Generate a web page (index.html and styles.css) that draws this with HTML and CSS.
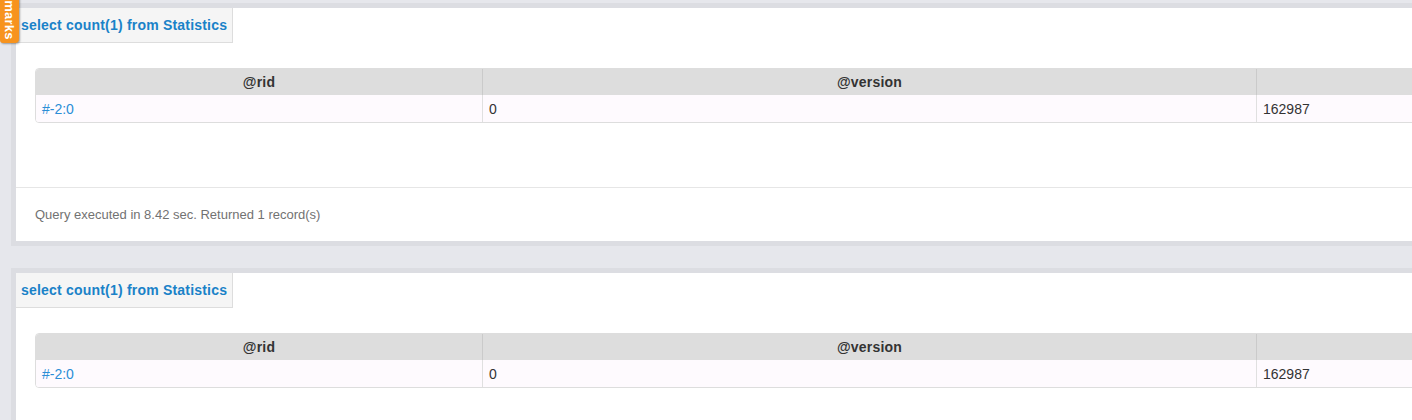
FILE: index.html
```html
<!DOCTYPE html>
<html>
<head>
<meta charset="utf-8">
<link rel="stylesheet" href="styles.css">
</head>
<body>
<div class="bookmarks">Bookmarks</div>
<div class="results">
  <section class="panel">
    <div class="tab">select count(1) from Statistics</div>
    <div class="table-wrap">
      <table class="grid">
        <colgroup><col class="c1"><col class="c2"><col class="c3"></colgroup>
        <thead><tr><th>@rid</th><th>@version</th><th></th></tr></thead>
        <tbody><tr><td><a class="rid">#-2:0</a></td><td>0</td><td>162987</td></tr></tbody>
      </table>
    </div>
    <div class="footer">Query executed in 8.42 sec. Returned 1 record(s)</div>
  </section>
  <section class="panel">
    <div class="tab">select count(1) from Statistics</div>
    <div class="table-wrap">
      <table class="grid">
        <colgroup><col class="c1"><col class="c2"><col class="c3"></colgroup>
        <thead><tr><th>@rid</th><th>@version</th><th></th></tr></thead>
        <tbody><tr><td><a class="rid">#-2:0</a></td><td>0</td><td>162987</td></tr></tbody>
      </table>
    </div>
    <div class="footer">Query executed in 8.42 sec. Returned 1 record(s)</div>
  </section>
</div>
</body>
</html>
```

FILE: styles.css
```css
html, body {
  margin: 0;
  padding: 0;
}
body {
  background: #e6e7ec;
  font-family: "Liberation Sans", Arial, sans-serif;
  overflow: hidden;
  width: 1412px;
  height: 420px;
}
.bookmarks {
  position: absolute;
  left: 0;
  bottom: 377px;
  width: 19px;
  padding: 6px 0 3px;
  background: #f7931e;
  color: #fff;
  font-weight: bold;
  font-size: 13px;
  letter-spacing: 0.2px;
  line-height: 19px;
  text-align: center;
  writing-mode: vertical-rl;
  border-radius: 0 0 4px 3px;
  box-shadow: 1px 1px 2px rgba(0, 0, 0, 0.35);
  z-index: 5;
}
.results {
  display: flex;
  flex-direction: column;
  gap: 22px;
  padding: 3px 0 0 11px;
}
.panel {
  width: 1800px;
  flex: none;
  background: #fff;
  border: 5px solid #dcdde2;
  border-right: none;
  display: flex;
  flex-direction: column;
  align-items: flex-start;
}
.tab {
  box-sizing: border-box;
  width: 217px;
  height: 35px;
  line-height: 34px;
  padding-left: 5px;
  background: #f5f5f5;
  border-right: 1px solid #dddddd;
  border-bottom: 1px solid #dddddd;
  color: #1a82c8;
  font-weight: bold;
  font-size: 14px;
  letter-spacing: 0.2px;
  white-space: nowrap;
}
.table-wrap {
  margin: 25px 0 0 19px;
}
.grid {
  width: 1650px;
  table-layout: fixed;
  border-collapse: separate;
  border-spacing: 0;
  border: 1px solid #dddddd;
  border-radius: 4px;
  overflow: hidden;
  font-size: 14px;
  color: #333;
}
.c1 { width: 446px; }
.c2 { width: 774px; }
.grid th {
  height: 26px;
  padding: 0;
  background: #dddddd;
  font-weight: bold;
  letter-spacing: 0.2px;
  text-align: center;
  color: #333;
}
.grid th + th {
  border-left: 1px solid #cacaca;
}
.grid td {
  height: 27px;
  padding: 0 6px;
  background: #fefafe;
  text-align: left;
}
.grid td + td {
  border-left: 1px solid #e0e0e0;
}
.rid {
  color: #2b8ed6;
  text-decoration: none;
}
.footer {
  align-self: stretch;
  margin-top: 64px;
  border-top: 1px solid #e6e6e6;
  height: 53px;
  line-height: 53px;
  padding-left: 19px;
  font-size: 13px;
  color: #727272;
}
```
